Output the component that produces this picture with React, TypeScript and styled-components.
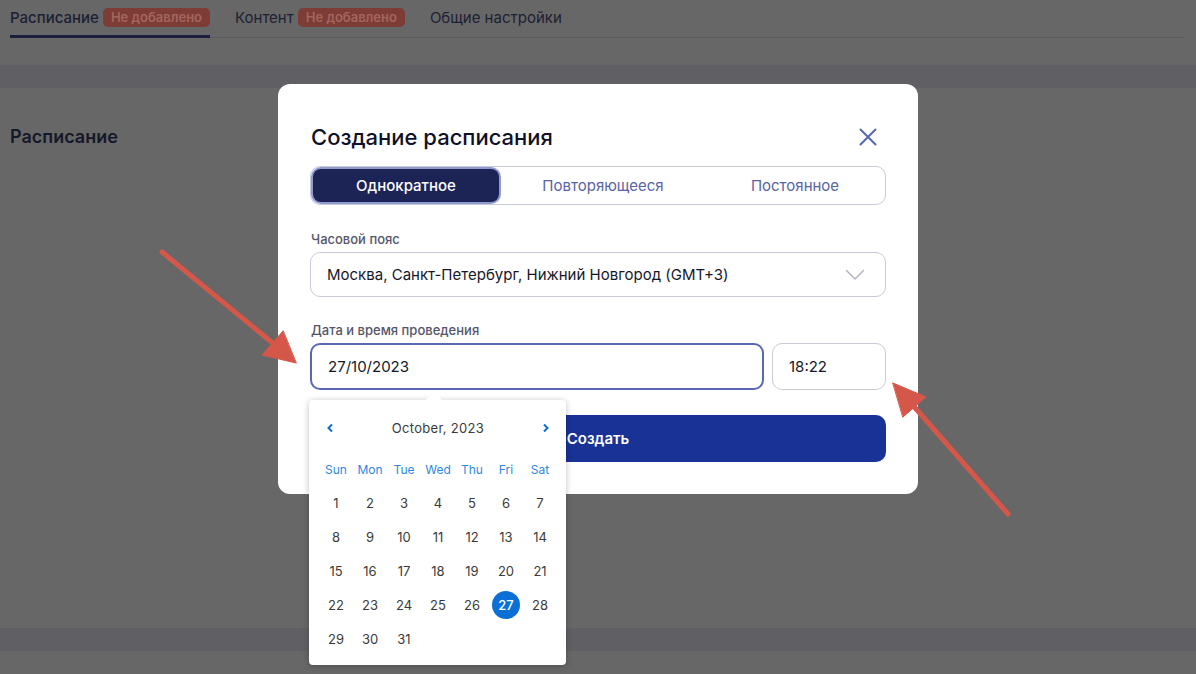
import styled, { createGlobalStyle } from 'styled-components';

const GlobalStyle = createGlobalStyle`
  html, body {
    margin: 0;
    padding: 0;
    background: #676767;
    font-family: Inter, "Noto Sans", sans-serif;
  }
  * { box-sizing: border-box; }
`;

const Page = styled.div`
  position: relative;
  width: 1196px;
  height: 674px;
  overflow: hidden;
  background: #676767;
`;

const TabBar = styled.div`
  display: flex;
  align-items: flex-start;
  gap: 25px;
  margin: 0 11px 0 10px;
  height: 38px;
  border-bottom: 1px solid #5d5d5f;
`;

const Tab = styled.div<{ $active?: boolean }>`
  display: flex;
  align-items: center;
  gap: 4px;
  height: 38px;
  padding-bottom: 1px;
  font-size: 15px;
  color: #1d2033;
  font-weight: ${p => (p.$active ? 500 : 400)};
  border-bottom: 3px solid ${p => (p.$active ? '#1a1f3c' : 'transparent')};
  margin-bottom: -1px;
`;

const Badge = styled.span`
  display: inline-flex;
  align-items: center;
  height: 19px;
  padding: 0 8px;
  border-radius: 5px;
  background: #7d3c36;
  color: #a3665f;
  font-size: 13px;
  font-weight: 600;
`;

const Band = styled.div<{ $top: number }>`
  height: 23px;
  margin-top: ${p => p.$top}px;
  background: #606064;
`;

const SectionTitle = styled.h2`
  margin: 38px 0 0 10px;
  font-size: 18px;
  font-weight: 600;
  color: #15172a;
  height: 22px;
  line-height: 22px;
`;

const Modal = styled.div`
  position: absolute;
  left: 278px;
  top: 84px;
  width: 640px;
  height: 410px;
  background: #fff;
  border-radius: 12px;
  padding: 38px 32px 32px;
  display: flex;
  flex-direction: column;
`;

const ModalHeader = styled.div`
  display: flex;
  align-items: center;
  justify-content: space-between;
  height: 30px;
  padding-left: 1px;
`;

const ModalTitle = styled.h1`
  margin: 0;
  font-size: 22px;
  font-weight: 500;
  color: #0f1128;
`;

const CloseButton = styled.button`
  border: 0;
  background: none;
  padding: 0;
  width: 20px;
  height: 20px;
  margin-right: 8px;
  display: flex;
  align-items: center;
  justify-content: center;
  cursor: pointer;
`;

const Segmented = styled.div`
  margin-top: 15px;
  height: 40px;
  border: 1px solid #c9cbd9;
  border-radius: 10px;
  display: grid;
  grid-template-columns: 188px 1fr 1fr;
  padding: 1px;
`;

const Segment = styled.div<{ $active?: boolean }>`
  display: flex;
  align-items: center;
  justify-content: center;
  font-size: 15px;
  border-radius: 8px;
  color: ${p => (p.$active ? '#fff' : '#5863a3')};
  background: ${p => (p.$active ? '#1c2456' : 'transparent')};
  font-weight: ${p => (p.$active ? 500 : 400)};
  box-shadow: ${p => (p.$active ? '0 0 0 2px #8e99cf' : 'none')};
  padding-left: ${p => (p.$active ? 0 : 14)}px;
  margin: 1px;
`;

const Label = styled.div<{ $top: number }>`
  margin-top: ${p => p.$top}px;
  margin-left: 1px;
  font-size: 13px;
  font-weight: 500;
  color: #55566a;
  height: 16px;
  line-height: 16px;
`;

const Field = styled.div<{ $focused?: boolean }>`
  position: relative;
  height: 47px;
  margin-top: 5px;
  border: ${p => (p.$focused ? '2px solid #5a67b4' : '1px solid #c9cbd9')};
  border-radius: 10px;
  display: flex;
  align-items: center;
  padding-left: 16px;
  font-size: 15px;
  color: #16182a;
`;

const SelectField = styled(Field)`
  justify-content: space-between;
  padding-right: 20px;
`;

const DateRow = styled.div`
  display: flex;
  gap: 8px;
`;

const DateWrap = styled.div`
  position: relative;
  flex: 1;
`;

const TimeWrap = styled.div`
  width: 114px;
`;

const SubmitButton = styled.button`
  margin-top: 25px;
  height: 48px;
  border: 0;
  border-radius: 10px;
  background: #193295;
  color: #fff;
  font-family: inherit;
  font-size: 15px;
  font-weight: 600;
`;

const Calendar = styled.div`
  position: absolute;
  left: -1px;
  top: 62px;
  width: 257px;
  height: 265px;
  background: #fff;
  border-radius: 4px;
  box-shadow: 0 1px 6px rgba(0, 0, 0, 0.25);
  padding: 14px 9px 0 10px;
  z-index: 2;

  &::before {
    content: '';
    position: absolute;
    top: -8px;
    left: 117px;
    width: 0;
    height: 0;
    border-left: 8px solid transparent;
    border-right: 8px solid transparent;
    border-bottom: 8px solid #fff;
  }
`;

const CalHeader = styled.div`
  display: flex;
  align-items: center;
  justify-content: space-between;
  height: 28px;
  padding: 0 7px;
  font-size: 13px;
  color: #3a3a3a;
  letter-spacing: 0.3px;
`;

const NavArrow = styled.span`
  display: flex;
  width: 8px;
  height: 10px;
`;

const DayGrid = styled.div`
  display: grid;
  grid-template-columns: repeat(7, 34px);
  grid-auto-rows: 34px;
  margin-top: 10px;
`;

const WeekDay = styled.div`
  display: flex;
  align-items: center;
  justify-content: center;
  font-size: 12px;
  color: #2e87e2;
`;

const Day = styled.div<{ $selected?: boolean }>`
  display: flex;
  align-items: center;
  justify-content: center;

  span {
    width: 28px;
    height: 28px;
    border-radius: 50%;
    display: flex;
    align-items: center;
    justify-content: center;
    font-size: 13px;
    color: ${p => (p.$selected ? '#fff' : '#3a3a3a')};
    background: ${p => (p.$selected ? '#0b70d6' : 'transparent')};
    font-weight: ${p => (p.$selected ? 500 : 400)};
  }
`;

const Annotations = styled.svg`
  position: absolute;
  left: 0;
  top: 0;
  pointer-events: none;
  z-index: 5;
`;

const weekDays = ['Sun', 'Mon', 'Tue', 'Wed', 'Thu', 'Fri', 'Sat'];
const days = Array.from({ length: 31 }, (_, i) => i + 1);

export default function App() {
  return (
    <Page>
      <GlobalStyle />
      <TabBar>
        <Tab $active>
          Расписание <Badge>Не добавлено</Badge>
        </Tab>
        <Tab>
          Контент <Badge>Не добавлено</Badge>
        </Tab>
        <Tab>Общие настройки</Tab>
      </TabBar>
      <Band $top={27} />
      <SectionTitle>Расписание</SectionTitle>
      <Band $top={480} />

      <Modal>
        <ModalHeader>
          <ModalTitle>Создание расписания</ModalTitle>
          <CloseButton aria-label="Закрыть">
            <svg width="18" height="18" viewBox="0 0 18 18">
              <path d="M1.5 1.5 L16.5 16.5 M16.5 1.5 L1.5 16.5" stroke="#5866b3" strokeWidth="2" strokeLinecap="round" />
            </svg>
          </CloseButton>
        </ModalHeader>

        <Segmented>
          <Segment $active>Однократное</Segment>
          <Segment>Повторяющееся</Segment>
          <Segment>Постоянное</Segment>
        </Segmented>

        <Label $top={26}>Часовой пояс</Label>
        <SelectField>
          Москва, Санкт-Петербург, Нижний Новгород (GMT+3)
          <svg width="20" height="12" viewBox="0 0 20 12">
            <path d="M1.5 1.5 L10 10 L18.5 1.5" fill="none" stroke="#b3b4c4" strokeWidth="1.5" strokeLinecap="round" />
          </svg>
        </SelectField>

        <Label $top={25}>Дата и время проведения</Label>
        <DateRow>
          <DateWrap>
            <Field $focused>27/10/2023</Field>
            <Calendar>
              <CalHeader>
                <NavArrow>
                  <svg width="8" height="10" viewBox="0 0 8 10">
                    <path d="M6 1.5 L2.5 5 L6 8.5" fill="none" stroke="#0a6ed1" strokeWidth="2" />
                  </svg>
                </NavArrow>
                October, 2023
                <NavArrow>
                  <svg width="8" height="10" viewBox="0 0 8 10">
                    <path d="M2 1.5 L5.5 5 L2 8.5" fill="none" stroke="#0a6ed1" strokeWidth="2" />
                  </svg>
                </NavArrow>
              </CalHeader>
              <DayGrid>
                {weekDays.map(d => (
                  <WeekDay key={d}>{d}</WeekDay>
                ))}
                {days.map(d => (
                  <Day key={d} $selected={d === 27}>
                    <span>{d}</span>
                  </Day>
                ))}
              </DayGrid>
            </Calendar>
          </DateWrap>
          <TimeWrap>
            <Field>18:22</Field>
          </TimeWrap>
        </DateRow>

        <SubmitButton>Создать</SubmitButton>
      </Modal>

      <Annotations width="1196" height="674" viewBox="0 0 1196 674">
        <g fill="#d4574a" stroke="#d4574a" strokeLinecap="round">
          <line x1="162" y1="252" x2="275" y2="345" strokeWidth="5" />
          <polygon points="296,363 262,355 283,331" strokeWidth="1" strokeLinejoin="round" />
          <line x1="1008" y1="514" x2="910" y2="402" strokeWidth="5" />
          <polygon points="893,383 926,397 903,417" strokeWidth="1" strokeLinejoin="round" />
        </g>
      </Annotations>
    </Page>
  );
}
